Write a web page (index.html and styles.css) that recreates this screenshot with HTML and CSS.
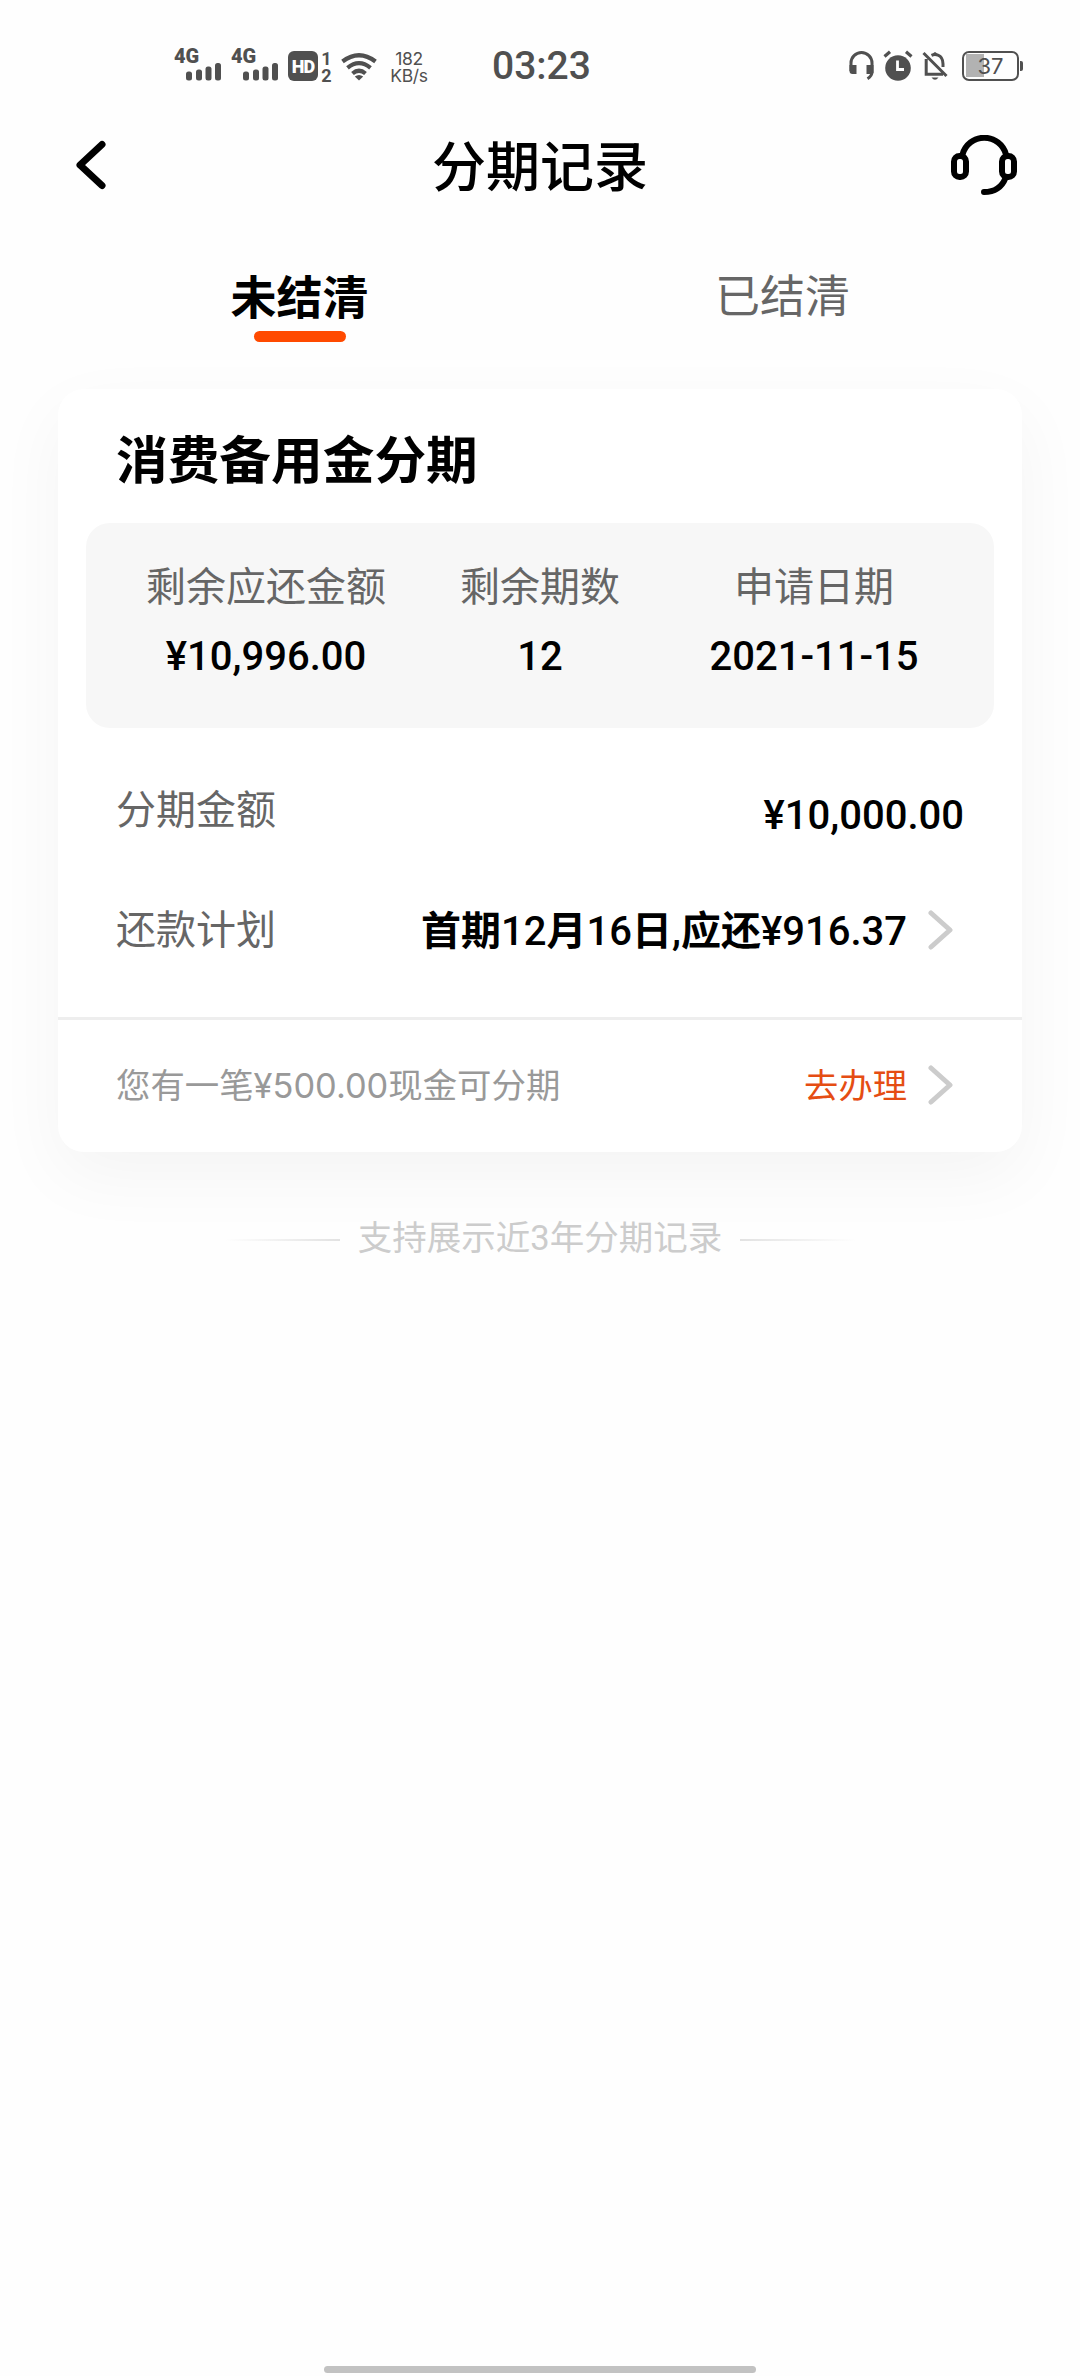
FILE: index.html
```html
<!DOCTYPE html>
<html lang="zh-CN">
<head>
<meta charset="utf-8">
<title>分期记录</title>
<link rel="stylesheet" href="styles.css">
</head>
<body>
<div class="status">
  <div class="status-left">
    <div class="signal"><span>4G</span><svg width="36" height="18" viewBox="0 0 36 18"><rect x="0" y="8.500" width="6" height="9" rx="2.500"/><rect x="10" y="6.500" width="6" height="11" rx="2.500"/><rect x="19.500" y="3.500" width="6" height="14" rx="2.500"/><rect x="29" y="0" width="6" height="17.500" rx="2.500"/></svg></div>
    <div class="signal"><span>4G</span><svg width="36" height="18" viewBox="0 0 36 18"><rect x="0" y="8.500" width="6" height="9" rx="2.500"/><rect x="10" y="6.500" width="6" height="11" rx="2.500"/><rect x="19.500" y="3.500" width="6" height="14" rx="2.500"/><rect x="29" y="0" width="6" height="17.500" rx="2.500"/></svg></div>
    <div class="hd">HD</div>
    <div class="sim"><span>1</span><span>2</span></div>
    <svg class="wifi" width="36" height="30" viewBox="0 0 36 30" fill="none" stroke="#505050" stroke-width="4.200"><path d="M1.500 9.500Q18-3 34.500 9.500M6.500 15.800Q18 6.500 29.500 15.800M11.500 21.500Q18 16 24.500 21.500"/><path d="M18 28.500l-4.200-4q4.200-3 8.400 0z" fill="#505050" stroke="none"/></svg>
    <div class="speed"><span>182</span><span>KB/s</span></div>
  </div>
  <div class="clock">03:23</div>
  <div class="status-right">
    <svg width="25" height="31" viewBox="0 0 25 31"><path d="M2 21V13a10.500 10.500 0 0 1 21 0v9q0 4-4.500 6.800" fill="none" stroke="#505050" stroke-width="3"/><path d="M.500 15h7v9h-4q-3 0-3-3zM17.500 15h7v8l-2 1h-5z" fill="#505050"/></svg>
    <svg width="30" height="31" viewBox="0 0 30 31"><circle cx="15" cy="18" r="12.800" fill="#505050"/><path d="M1.500 6.500l5.500-4.700M28.500 6.500L23 1.800" stroke="#505050" stroke-width="3.200"/><path d="M14.500 10.500v9h6.500" fill="none" stroke="#fff" stroke-width="2.800"/></svg>
    <svg width="26" height="31" viewBox="0 0 26 31"><path d="M1.500 3l23 23M4.200 9v15.200H21M9.500 5.300Q13 3.800 16 5.200q5 2 5 8.800v3" fill="none" stroke="#505050" stroke-width="3"/><path d="M10.500 4.500Q13-.5 15.500 4.500zM9.500 27.500h7q-3.500 4.500-7 0z" fill="#505050"/></svg>
    <div class="battery"><span>37</span></div>
  </div>
</div>

<header class="nav">
  <svg width="31" height="50" viewBox="0 0 31 50"><path d="M27 4.500L5 25l22 20.500" fill="none" stroke="#000" stroke-width="7" stroke-linecap="round" stroke-linejoin="round"/></svg>
  <h1>分期记录</h1>
  <svg width="66" height="60" viewBox="0 0 66 60" fill="none" stroke="#000" stroke-width="6"><path d="M11.500 19.500a22.500 22.500 0 0 1 43.500 0"/><rect x="3" y="21" width="12" height="21" rx="5.500"/><rect x="51" y="21" width="12" height="21" rx="5.500"/><path d="M54.500 43Q49 57 33 57" stroke-linecap="round"/></svg>
</header>

<nav class="tabs">
  <div class="tab active">未结清</div>
  <div class="tab">已结清</div>
</nav>

<main class="card">
  <h2>消费备用金分期</h2>
  <section class="summary">
    <div class="cell"><span class="label">剩余应还金额</span><span class="value">¥10,996.00</span></div>
    <div class="cell"><span class="label">剩余期数</span><span class="value">12</span></div>
    <div class="cell"><span class="label">申请日期</span><span class="value">2021-11-15</span></div>
  </section>
  <div class="row amount"><span class="label">分期金额</span><span class="value">¥10,000.00</span></div>
  <div class="row plan"><span class="label">还款计划</span><span class="value"><b>首期</b>12<b>月</b>16<b>日</b>,<b>应还</b>¥916.37</span>
    <svg class="chevron" width="26" height="40" viewBox="0 0 26 40"><path d="M3 3l19 17L3 37"/></svg></div>
  <div class="row offer"><span class="note">您有一笔¥500.00现金可分期</span><span class="action">去办理</span>
    <svg class="chevron" width="26" height="40" viewBox="0 0 26 40"><path d="M3 3l19 17L3 37"/></svg></div>
</main>

<footer class="tip"><i></i><span>支持展示近3年分期记录</span><i class="right"></i></footer>
<div class="home"></div>
</body>
</html>
```
FILE: styles.css
```css
* { box-sizing: border-box; margin: 0; padding: 0; }
body {
  width: 1080px; height: 2376px; overflow: hidden;
  display: flex; flex-direction: column;
  background: #fefefe; color: #000;
  font-family: Roboto, "Noto Sans CJK SC", sans-serif;
}
svg { display: block; flex: none; }
.status {
  height: 110px; padding: 50px 58px 0 174px;
  display: flex; align-items: flex-start; color: #505050;
}
.status-left { display: flex; width: 318px; }
.signal {
  width: 48px; height: 32px; margin: -4px 9px 0 0;
  display: flex; flex-direction: column;
  font: 900 20px/21px Roboto, sans-serif;
}
.signal svg { margin: -4px 0 0 12px; fill: #505050; }
.hd {
  width: 30px; height: 30px; margin-top: 1px; border-radius: 6px;
  background: #505050; color: #fff;
  font: 900 18px/31px Roboto, sans-serif; text-align: center; letter-spacing: -1px;
}
.sim {
  display: flex; flex-direction: column; width: 13px; margin-left: 2px;
  font: 700 18px/17px Roboto, sans-serif; text-align: center;
}
.wifi { margin: 2px 0 0 8px; }
.speed {
  display: flex; flex-direction: column; width: 50px; margin-left: 7px;
  font: 400 17.5px/17px Inter, sans-serif; text-align: center; letter-spacing: -0.3px;
}
.clock { width: 98px; margin-top: 1px; font: 500 39px/31px Roboto, sans-serif; white-space: nowrap; }
.status-right { display: flex; margin-left: auto; gap: 9px; }
.battery {
  position: relative; width: 57px; height: 30px; margin: 1px 3px 0 5px;
  border: 2.5px solid #505050; border-radius: 7px; padding-top: 2px;
  background: linear-gradient(#b2b2b2, #b2b2b2) 2px 1px / 18px 23px no-repeat;
  font: 400 22px/23px Inter, sans-serif; text-align: center;
}
.battery::after {
  content: ""; position: absolute; right: -6px; top: 8px;
  width: 3px; height: 10px; background: #505050; border-radius: 0 2px 2px 0;
}
.nav {
  height: 110px; padding: 0 63px 0 75px;
  display: grid; grid-template-columns: 66px 1fr 66px; align-items: center;
}
.nav h1 { font-size: 54px; line-height: 60px; font-weight: 500; text-align: center; margin-left: -12px; padding-top: 7px; }
.tabs { height: 169px; padding: 0 56px 0 58px; display: flex; }
.tab { flex: 1; padding-top: 48px; font-size: 45px; line-height: 60px; color: #666; text-align: center; }
.tab.active { color: #000; font-size: 46px; font-weight: 700; }
.tab.active::after {
  content: ""; display: block; width: 92px; height: 11px; margin: 3px auto 0;
  border-radius: 6px; background: #ff4a00;
}
.card {
  width: 964px; height: 763px; margin: 0 auto;
  display: flex; flex-direction: column; border-radius: 26px; background: #fff;
  box-shadow: 0 24px 70px rgba(0, 0, 0, .045);
}
.card h2 { margin: 43px 58px 0; height: 91px; font-size: 51.7px; line-height: 60px; font-weight: 700; }
.summary {
  height: 205px; margin: 0 28px; padding: 40px 43px 0;
  display: flex; justify-content: space-between;
  background: #f7f7f7; border-radius: 24px;
}
.cell { display: flex; flex-direction: column; align-items: center; width: 274px; }
.label { color: #666; font-size: 40px; line-height: 50px; }
.value { font-size: 40px; line-height: 50px; font-weight: 500; }
.value b { font-weight: 700; }
.cell .value { margin-top: 19px; }
.row { display: flex; align-items: center; padding: 0 41px 0 58px; }
.row > :nth-child(2) { margin-left: auto; }
.amount { height: 166px; padding-right: 58px; }
.amount .value { padding-top: 10px; }
.plan { height: 74px; margin-bottom: 49px; }
.plan .value { padding-top: 2px; }
.chevron { margin: -2px 27px 0 21px; fill: none; stroke: #ccc; stroke-width: 5; stroke-linecap: round; stroke-linejoin: round; }
.offer { flex: 1; border-top: 3px solid #eee; font-size: 34.3px; line-height: 44px; }
.note { color: #999; font-family: Inter, "Noto Sans CJK SC", sans-serif; font-size: 34.4px; }
.action { color: #e54d13; }
.tip {
  margin-top: 64px; height: 44px; display: flex; justify-content: center; align-items: center; gap: 18px;
  color: #ccc; font-size: 34.5px; line-height: 44px;
}
.tip i { width: 115px; height: 2px; margin-top: 4px; background: linear-gradient(90deg, transparent, #e2e2e2); }
.tip i.right { background: linear-gradient(270deg, transparent, #e2e2e2); }
.home { width: 432px; height: 7px; margin: auto auto 3px; border-radius: 4px; background: #c2c2c2; }
```
